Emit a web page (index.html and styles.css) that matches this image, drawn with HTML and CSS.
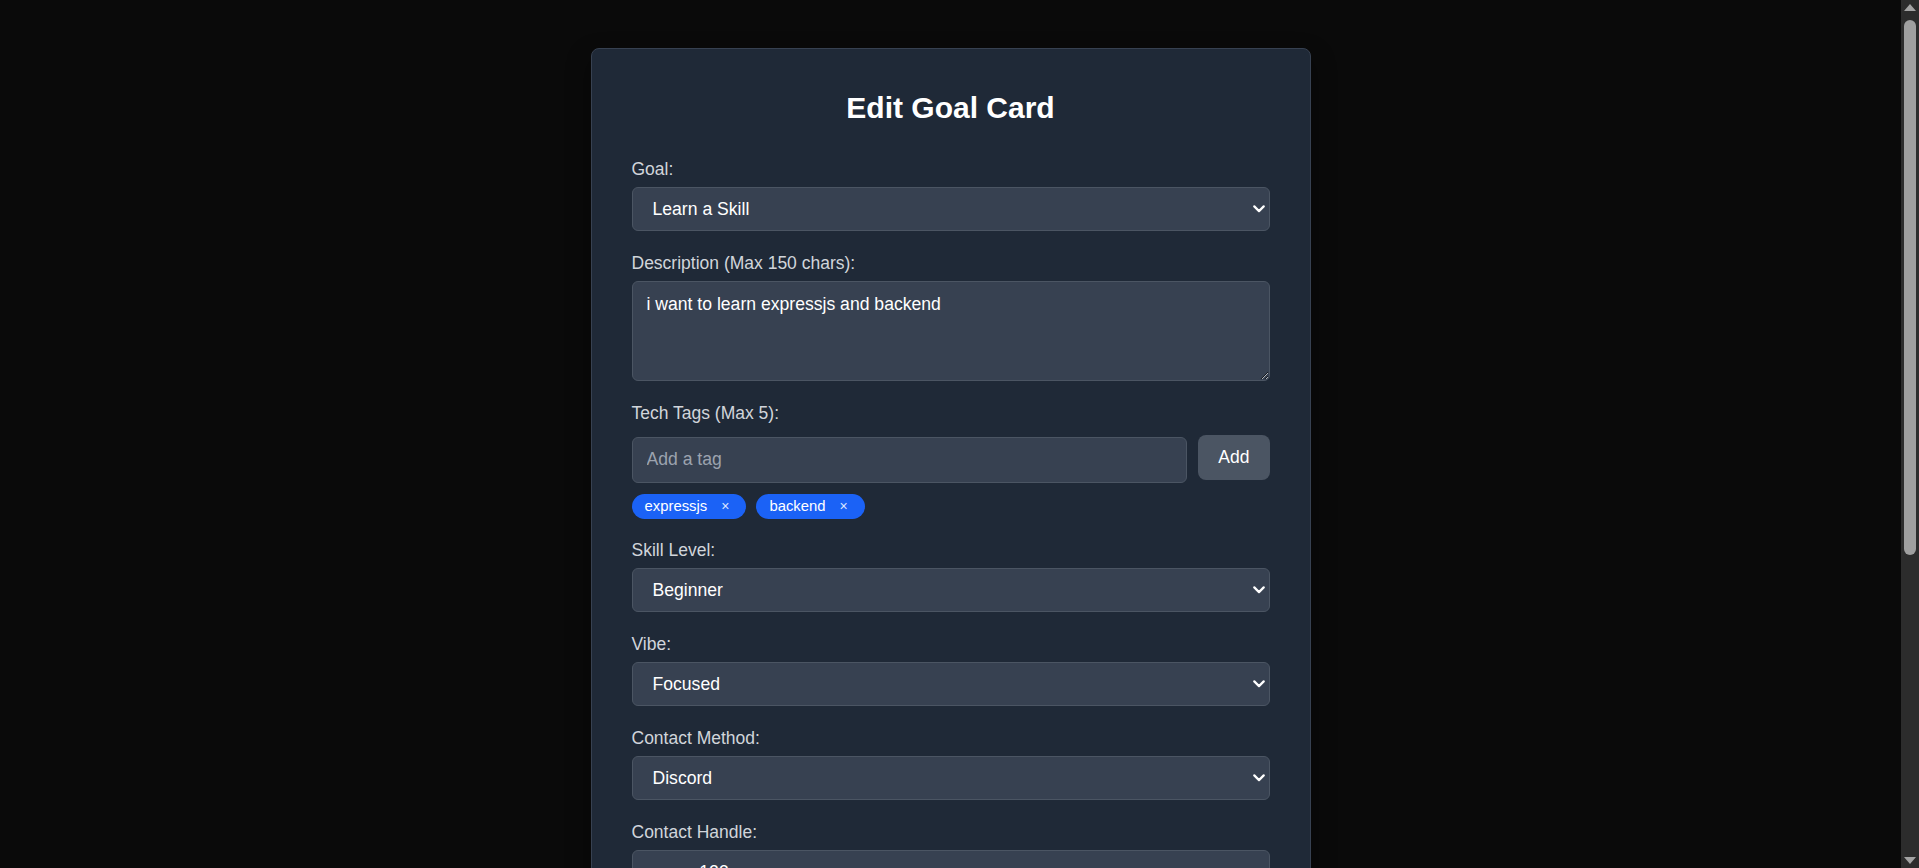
FILE: index.html
```html
<!DOCTYPE html>
<html lang="en">
<head>
<meta charset="utf-8">
<title>Edit Goal Card</title>
<link rel="stylesheet" href="styles.css">
</head>
<body>
<main class="page">
  <form class="card">
    <h1 class="title">Edit Goal Card</h1>

    <div class="field">
      <label class="label" for="goal">Goal:</label>
      <div class="select-wrap">
        <select id="goal" class="control select">
          <option>Learn a Skill</option>
          <option>Build a Project</option>
          <option>Find a Study Buddy</option>
        </select>
        <svg class="chevron" width="12" height="8" viewBox="0 0 12 8" aria-hidden="true"><path d="M1.3 1.4 L6 6.1 L10.7 1.4" fill="none" stroke="#ffffff" stroke-width="2.2" stroke-linecap="round" stroke-linejoin="round"/></svg>
      </div>
    </div>

    <div class="field">
      <label class="label" for="desc">Description (Max 150 chars):</label>
      <textarea id="desc" class="control textarea" maxlength="150">i want to learn expressjs and backend</textarea>
    </div>

    <div class="field field-tags">
      <label class="label" for="tag">Tech Tags (Max 5):</label>
      <div class="tag-row">
        <input id="tag" class="control tag-input" type="text" placeholder="Add a tag">
        <button type="button" class="add-btn">Add</button>
      </div>
      <div class="chips">
        <span class="chip">expressjs<button type="button" class="chip-x">×</button></span>
        <span class="chip">backend<button type="button" class="chip-x">×</button></span>
      </div>
    </div>

    <div class="field">
      <label class="label" for="level">Skill Level:</label>
      <div class="select-wrap">
        <select id="level" class="control select">
          <option>Beginner</option>
          <option>Intermediate</option>
          <option>Advanced</option>
        </select>
        <svg class="chevron" width="12" height="8" viewBox="0 0 12 8" aria-hidden="true"><path d="M1.3 1.4 L6 6.1 L10.7 1.4" fill="none" stroke="#ffffff" stroke-width="2.2" stroke-linecap="round" stroke-linejoin="round"/></svg>
      </div>
    </div>

    <div class="field">
      <label class="label" for="vibe">Vibe:</label>
      <div class="select-wrap">
        <select id="vibe" class="control select">
          <option>Focused</option>
          <option>Chill</option>
          <option>Competitive</option>
        </select>
        <svg class="chevron" width="12" height="8" viewBox="0 0 12 8" aria-hidden="true"><path d="M1.3 1.4 L6 6.1 L10.7 1.4" fill="none" stroke="#ffffff" stroke-width="2.2" stroke-linecap="round" stroke-linejoin="round"/></svg>
      </div>
    </div>

    <div class="field">
      <label class="label" for="method">Contact Method:</label>
      <div class="select-wrap">
        <select id="method" class="control select">
          <option>Discord</option>
          <option>Email</option>
          <option>Telegram</option>
        </select>
        <svg class="chevron" width="12" height="8" viewBox="0 0 12 8" aria-hidden="true"><path d="M1.3 1.4 L6 6.1 L10.7 1.4" fill="none" stroke="#ffffff" stroke-width="2.2" stroke-linecap="round" stroke-linejoin="round"/></svg>
      </div>
    </div>

    <div class="field">
      <label class="label" for="handle">Contact Handle:</label>
      <input id="handle" class="control text-input" type="text" value="manav123">
    </div>

    <div class="field">
      <label class="label" for="avail">Availability:</label>
      <div class="select-wrap">
        <select id="avail" class="control select">
          <option>Weekends</option>
          <option>Weekdays</option>
          <option>Anytime</option>
        </select>
        <svg class="chevron" width="12" height="8" viewBox="0 0 12 8" aria-hidden="true"><path d="M1.3 1.4 L6 6.1 L10.7 1.4" fill="none" stroke="#ffffff" stroke-width="2.2" stroke-linecap="round" stroke-linejoin="round"/></svg>
      </div>
    </div>

    <div class="field">
      <label class="label" for="tz">Timezone:</label>
      <div class="select-wrap">
        <select id="tz" class="control select">
          <option>IST (UTC+5:30)</option>
          <option>UTC</option>
        </select>
        <svg class="chevron" width="12" height="8" viewBox="0 0 12 8" aria-hidden="true"><path d="M1.3 1.4 L6 6.1 L10.7 1.4" fill="none" stroke="#ffffff" stroke-width="2.2" stroke-linecap="round" stroke-linejoin="round"/></svg>
      </div>
    </div>

    <div class="field">
      <label class="label" for="dur">Duration:</label>
      <div class="select-wrap">
        <select id="dur" class="control select">
          <option>1 Month</option>
          <option>3 Months</option>
        </select>
        <svg class="chevron" width="12" height="8" viewBox="0 0 12 8" aria-hidden="true"><path d="M1.3 1.4 L6 6.1 L10.7 1.4" fill="none" stroke="#ffffff" stroke-width="2.2" stroke-linecap="round" stroke-linejoin="round"/></svg>
      </div>
    </div>

    <div class="actions">
      <button type="submit" class="save-btn">Save Changes</button>
      <button type="button" class="cancel-btn">Cancel</button>
    </div>
  </form>
</main>

<div class="scrollbar" aria-hidden="true">
  <span class="sb-arrow sb-up"></span>
  <span class="sb-thumb"></span>
  <span class="sb-arrow sb-down"></span>
</div>
</body>
</html>
```

FILE: styles.css
```css
html {
  color-scheme: dark;
  background: #0a0a0a;
}

body {
  margin: 0;
  padding-right: 18px;
  background: #0a0a0a;
  font-family: "Liberation Sans", Arial, sans-serif;
  color: #ffffff;
}

.page {
  padding: 48px 16px;
}

.card {
  box-sizing: border-box;
  max-width: 720px;
  margin: 0 auto;
  padding: 40px;
  background: #1f2937;
  border: 1px solid #374151;
  border-radius: 8px;
  box-shadow: 0 10px 25px rgba(0, 0, 0, 0.4);
}

.title {
  margin: 0 0 32px;
  font-size: 30px;
  line-height: 38px;
  font-weight: 700;
  text-align: center;
  color: #ffffff;
}

.field {
  margin-bottom: 22px;
}

.field-tags {
  margin-bottom: 21px;
}

.label {
  display: block;
  margin-bottom: 8px;
  font-size: 17.5px;
  line-height: 20px;
  color: #d1d5db;
}

.control {
  box-sizing: border-box;
  display: block;
  width: 100%;
  margin: 0;
  font-family: inherit;
  font-size: 17.6px;
  line-height: 20px;
  color: #ffffff;
  background-color: #374151;
  border: 1px solid #4b5563;
  border-radius: 6px;
  outline: none;
}

.select-wrap {
  position: relative;
}

.select {
  appearance: none;
  -webkit-appearance: none;
  height: 44px;
  padding: 0 36px 0 20px;
}

.chevron {
  position: absolute;
  right: 5px;
  top: 18px;
  pointer-events: none;
}

.textarea {
  height: 100px;
  padding: 12px 14px;
  resize: vertical;
}

.text-input,
.tag-input {
  height: 46px;
  padding: 12px 14px;
}

.tag-input::placeholder {
  color: #9ca3af;
}

.tag-row {
  display: flex;
  align-items: flex-start;
  gap: 11px;
  margin-top: 11.5px;
}

.tag-input {
  flex: 1;
  width: auto;
  margin-top: 2px;
}

.add-btn {
  flex: none;
  height: 45px;
  padding: 0 20px;
  font-family: inherit;
  font-size: 17.5px;
  color: #ffffff;
  background: #4b5563;
  border: none;
  border-radius: 8px;
  cursor: pointer;
}

.chips {
  display: flex;
  flex-wrap: wrap;
  gap: 10px;
  margin-top: 11px;
}

.chip {
  display: inline-flex;
  align-items: center;
  padding: 4px 13px;
  font-size: 14.85px;
  line-height: 17px;
  color: #ffffff;
  background: #1b62f6;
  border-radius: 999px;
}

.chip-x {
  margin-left: 10px;
  padding: 0 4px;
  font-family: inherit;
  font-size: 14px;
  line-height: 17px;
  color: #dbe4ff;
  background: none;
  border: none;
  cursor: pointer;
}

.actions {
  display: flex;
  gap: 12px;
  margin-top: 46px;
}

.save-btn,
.cancel-btn {
  flex: 1;
  height: 46px;
  font-family: inherit;
  font-size: 17.5px;
  font-weight: 700;
  color: #ffffff;
  border: none;
  border-radius: 8px;
  cursor: pointer;
}

.save-btn {
  background: #2563eb;
}

.cancel-btn {
  background: #4b5563;
}

.scrollbar {
  position: fixed;
  top: 0;
  right: 0;
  width: 18px;
  height: 100vh;
  background: #2c2c2c;
  display: flex;
  flex-direction: column;
  align-items: center;
}

.sb-arrow {
  width: 0;
  height: 0;
  border-left: 6px solid transparent;
  border-right: 6px solid transparent;
}

.sb-up {
  margin-top: 4px;
  border-bottom: 7px solid #a3a3a3;
}

.sb-down {
  margin-top: auto;
  margin-bottom: 4px;
  border-top: 7px solid #a3a3a3;
}

.sb-thumb {
  width: 12px;
  height: 535px;
  margin-top: 9px;
  border-radius: 6px;
  background: #9f9f9f;
}
```
